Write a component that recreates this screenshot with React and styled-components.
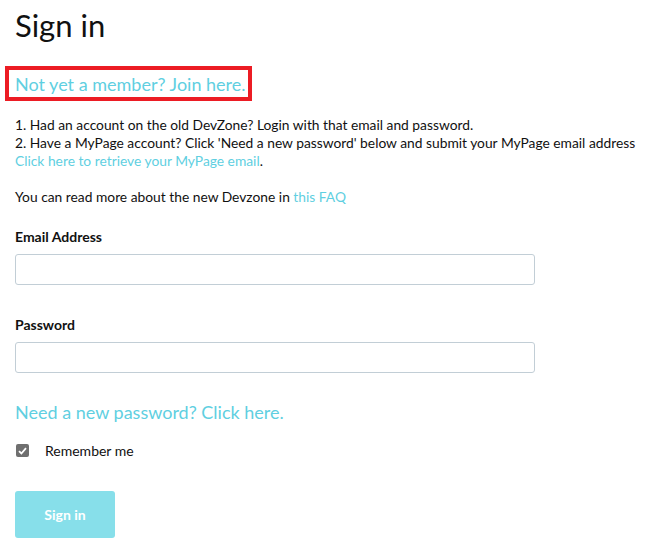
import styled, { createGlobalStyle } from "styled-components";

const GlobalStyle = createGlobalStyle`
  body {
    margin: 0;
    background: #ffffff;
    font-family: "Lato", "Liberation Sans", sans-serif;
    color: #111111;
  }
`;

const Page = styled.div`
  padding: 7px 15px 0 15px;
`;

const Title = styled.h1`
  margin: 0;
  font-size: 31px;
  font-weight: 400;
  line-height: 36px;
  color: #111111;
`;

const JoinBox = styled.div`
  display: inline-block;
  margin: 23px 0 0 -10px;
  padding: 2px 2px 1px 6px;
  border: 4px solid #ec1c24;
`;

const BigLink = styled.a`
  font-size: 18px;
  line-height: 24px;
  color: #5fcfe1;
  text-decoration: none;
`;

const Info = styled.div`
  margin-top: 15px;
  font-size: 13.8px;
  line-height: 18px;
  white-space: nowrap;
`;

const Link = styled.a`
  color: #5fcfe1;
  text-decoration: none;
`;

const Paragraph = styled.p`
  margin: 0 0 18px 0;
`;

const Field = styled.div`
  margin-top: 21px;

  & + & {
    margin-top: 30px;
  }
`;

const Label = styled.label`
  display: block;
  font-size: 14px;
  font-weight: 700;
  line-height: 20px;
  margin-bottom: 7px;
`;

const Input = styled.input`
  display: block;
  box-sizing: border-box;
  width: 520px;
  height: 31px;
  border: 1px solid #c2ced6;
  border-radius: 3px;
  background: #ffffff;
  outline: none;
`;

const Help = styled.div`
  margin-top: 27px;
`;

const Check = styled.label`
  display: flex;
  align-items: center;
  gap: 16px;
  margin-top: 18px;
  font-size: 14px;
`;

const Box = styled.span`
  display: inline-flex;
  align-items: center;
  justify-content: center;
  width: 13px;
  height: 13px;
  margin-left: 1px;
  border-radius: 2px;
  background: #6f6f6f;
`;

const Button = styled.button`
  margin-top: 32px;
  width: 100px;
  height: 47px;
  border: none;
  border-radius: 3px;
  background: #87dfea;
  color: #ffffff;
  font-family: inherit;
  font-size: 14px;
  font-weight: 700;
`;

export default function App() {
  return (
    <>
      <GlobalStyle />
      <Page>
        <Title>Sign in</Title>
        <JoinBox>
          <BigLink href="#">Not yet a member? Join here.</BigLink>
        </JoinBox>
        <Info>
          <div>1. Had an account on the old DevZone? Login with that email and password.</div>
          <div>
            2. Have a MyPage account? Click 'Need a new password' below and submit your MyPage email address
          </div>
          <Paragraph>
            <Link href="#">Click here to retrieve your MyPage email</Link>.
          </Paragraph>
          <div>
            You can read more about the new Devzone in <Link href="#">this FAQ</Link>
          </div>
        </Info>
        <Field>
          <Label>Email Address</Label>
          <Input type="text" />
        </Field>
        <Field>
          <Label>Password</Label>
          <Input type="password" />
        </Field>
        <Help>
          <BigLink href="#">Need a new password? Click here.</BigLink>
        </Help>
        <Check>
          <Box>
            <svg width="9" height="8" viewBox="0 0 9 8">
              <path d="M1 4.2 L3.4 6.5 L8 1.2" fill="none" stroke="#ffffff" strokeWidth="1.8" />
            </svg>
          </Box>
          Remember me
        </Check>
        <Button>Sign in</Button>
      </Page>
    </>
  );
}
